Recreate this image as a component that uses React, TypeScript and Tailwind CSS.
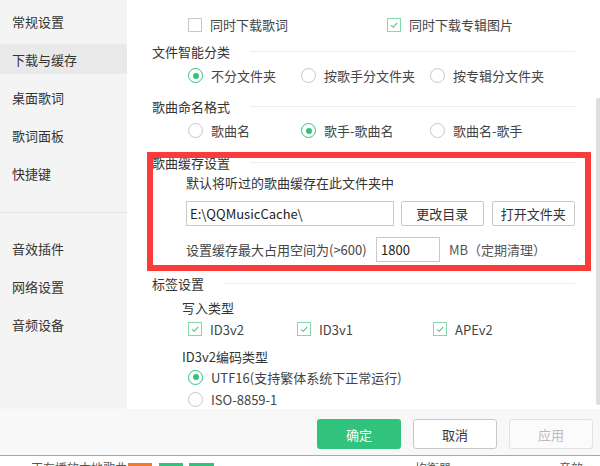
import React from 'react';

function Check({ checked }: { checked: boolean }) {
  return (
    <span
      className={`inline-flex w-[14px] h-[14px] border ${checked ? 'border-[#86d7ae]' : 'border-[#c8c8c8]'} bg-white items-center justify-center shrink-0`}
    >
      {checked && (
        <svg width="10" height="10" viewBox="0 0 10 10">
          <path d="M2 5.3 L4.2 7.3 L8.2 2.9" fill="none" stroke="#46c587" strokeWidth="1.1" />
        </svg>
      )}
    </span>
  );
}

function Radio({ checked }: { checked: boolean }) {
  return (
    <span
      className={`inline-flex w-[15px] h-[15px] rounded-full border ${checked ? 'border-[#31c27c]' : 'border-[#c6c6c6]'} bg-white items-center justify-center shrink-0`}
    >
      {checked && <span className="w-[6px] h-[6px] rounded-full bg-[#31c27c]" />}
    </span>
  );
}

function Opt({ kind, checked, label, w }: { kind: 'c' | 'r'; checked: boolean; label: string; w: string }) {
  return (
    <div className={`flex items-center gap-[8px] ${w}`}>
      {kind === 'c' ? <Check checked={checked} /> : <Radio checked={checked} />}
      <span className="text-[#444] whitespace-nowrap">{label}</span>
    </div>
  );
}

function Heading({ text, mt }: { text: string; mt: string }) {
  return (
    <div className={`flex items-center h-[20px] ${mt}`}>
      <span className="text-[#333] whitespace-nowrap">{text}</span>
      <div className="flex-1 h-px bg-[#ececec] ml-[20px]" />
    </div>
  );
}

const sideTop = ['常规设置', '下载与缓存', '桌面歌词', '歌词面板', '快捷键'];
const sideBottom = ['音效插件', '网络设置', '音频设备'];

export default function App() {
  return (
    <div
      className="relative w-[600px] h-[466px] overflow-hidden bg-white text-[13px] leading-none"
      style={{ fontFamily: '"Noto Sans CJK SC", "Noto Sans", sans-serif' }}
    >
      <div className="flex h-[409px]">
        {/* sidebar */}
        <div className="w-[127px] bg-[#f4f4f4] flex flex-col pt-[6px]">
          <div className="flex flex-col gap-[8px]">
            {sideTop.map((s, i) => (
              <div
                key={s}
                className={`h-[30px] flex items-center pl-[12px] text-[#333] ${i === 1 ? 'bg-[#e9e9e9]' : ''}`}
              >
                {s}
              </div>
            ))}
          </div>
          <div className="mt-[24px] h-px bg-[#e4e4e4]" />
          <div className="flex flex-col gap-[8px] mt-[20px]">
            {sideBottom.map((s) => (
              <div key={s} className="h-[30px] flex items-center pl-[12px] text-[#333]">
                {s}
              </div>
            ))}
          </div>
        </div>

        {/* main */}
        <div className="flex-1 overflow-hidden pl-[25px] pr-[25px] flex flex-col">
          <div className="flex items-center h-[20px] mt-[15px] ml-[36px]">
            <Opt kind="c" checked={false} label="同时下载歌词" w="w-[199px]" />
            <Opt kind="c" checked={true} label="同时下载专辑图片" w="w-[160px]" />
          </div>

          <Heading text="文件智能分类" mt="mt-[7px]" />
          <div className="flex items-center h-[20px] mt-[4px] ml-[36px]">
            <Opt kind="r" checked={true} label="不分文件夹" w="w-[113px]" />
            <Opt kind="r" checked={false} label="按歌手分文件夹" w="w-[129px]" />
            <Opt kind="r" checked={false} label="按专辑分文件夹" w="w-[130px]" />
          </div>

          <Heading text="歌曲命名格式" mt="mt-[11px]" />
          <div className="flex items-center h-[20px] mt-[4px] ml-[36px]">
            <Opt kind="r" checked={false} label="歌曲名" w="w-[113px]" />
            <Opt kind="r" checked={true} label="歌手-歌曲名" w="w-[129px]" />
            <Opt kind="r" checked={false} label="歌曲名-歌手" w="w-[130px]" />
          </div>

          <Heading text="歌曲缓存设置" mt="mt-[12px]" />
          <div className="h-[20px] flex items-center ml-[34px] text-[#333]">默认将听过的歌曲缓存在此文件夹中</div>
          <div className="flex items-center h-[25px] mt-[9px] ml-[34px]">
            <div className="w-[212px] h-[25px] border border-[#c9c9c9] bg-white flex items-center pl-[3px] text-[#222]">
              E:\QQMusicCache\
            </div>
            <div className="ml-[7px] w-[84px] h-[25px] border border-[#c9c9c9] rounded-[2px] bg-white flex items-center justify-center text-[#333]">
              更改目录
            </div>
            <div className="ml-[8px] w-[85px] h-[25px] border border-[#c9c9c9] rounded-[2px] bg-white flex items-center justify-center text-[#333]">
              打开文件夹
            </div>
          </div>
          <div className="flex items-center h-[25px] mt-[11px] ml-[34px]">
            <span className="w-[190px] text-[#444] whitespace-nowrap">设置缓存最大占用空间为(&gt;600)</span>
            <div className="w-[64px] h-[25px] border border-[#c9c9c9] bg-white flex items-center pl-[4px] text-[#222]">
              1800
            </div>
            <span className="ml-[9px] text-[#555] whitespace-nowrap">MB（定期清理）</span>
          </div>

          <Heading text="标签设置" mt="mt-[11px]" />
          <div className="h-[20px] flex items-center mt-[4px] ml-[30px] text-[#333]">写入类型</div>
          <div className="flex items-center h-[20px] mt-[2px] ml-[36px]">
            <Opt kind="c" checked={true} label="ID3v2" w="w-[109px]" />
            <Opt kind="c" checked={true} label="ID3v1" w="w-[136px]" />
            <Opt kind="c" checked={true} label="APEv2" w="w-[100px]" />
          </div>
          <div className="h-[20px] flex items-center mt-[7px] ml-[30px] text-[#333]">ID3v2编码类型</div>
          <div className="flex items-center h-[20px] mt-[1px] ml-[36px]">
            <Opt kind="r" checked={true} label="UTF16(支持繁体系统下正常运行)" w="w-[300px]" />
          </div>
          <div className="flex items-center h-[20px] mt-[2px] ml-[36px]">
            <Opt kind="r" checked={false} label="ISO-8859-1" w="w-[200px]" />
          </div>
        </div>
      </div>

      {/* footer */}
      <div className="h-[46px] bg-[#f8f8f8] flex justify-end items-start pt-[10px] pr-[7px] gap-[12px]">
        <div className="w-[84px] h-[30px] rounded-[3px] bg-[#31c27c] text-white flex items-center justify-center">确定</div>
        <div className="w-[84px] h-[30px] rounded-[3px] border border-[#c8c8c8] bg-white text-[#333] flex items-center justify-center">
          取消
        </div>
        <div className="w-[84px] h-[30px] rounded-[3px] border border-[#e2e2e2] bg-[#fbfbfb] text-[#bbb] flex items-center justify-center">
          应用
        </div>
      </div>
      <div className="h-px bg-[#a8a8a8]" />
      <div className="relative h-[10px] bg-white overflow-hidden">
        <div className="absolute left-[31px] top-[6px] text-[12px] text-[#555] whitespace-nowrap">正在播放本地歌曲</div>
        <div className="absolute left-[128px] top-[7px] w-[24px] h-[10px] bg-[#f07a2e]" />
        <div className="absolute left-[159px] top-[7px] w-[24px] h-[10px] bg-[#31c27c]" />
        <div className="absolute left-[189px] top-[7px] w-[25px] h-[10px] bg-[#31c27c]" />
        <div className="absolute left-[415px] top-[6px] text-[12px] text-[#555] whitespace-nowrap">均衡器</div>
        <div className="absolute left-[559px] top-[6px] text-[12px] text-[#555] whitespace-nowrap">音效</div>
      </div>

      {/* scrollbar */}
      <div className="absolute right-0 top-[98px] w-[4px] h-[307px] rounded-l-[2px] bg-[#dedede]" />

      {/* red annotation box */}
      <div className="absolute left-[147px] top-[152px] w-[444px] h-[119px] border-[6px] border-[#fb3a3a]" />
    </div>
  );
}
